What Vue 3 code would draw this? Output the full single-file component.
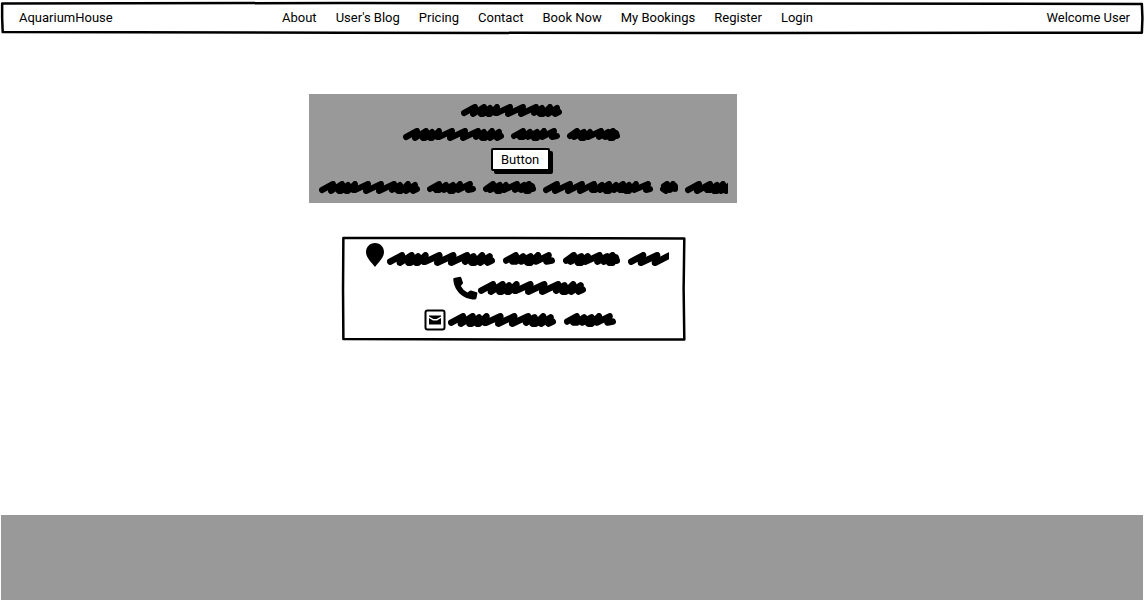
<script setup>
const links = ['About', "User's Blog", 'Pricing', 'Contact', 'Book Now', 'My Bookings', 'Register', 'Login']

// Placeholder handwriting: one zigzag pen stroke per word
const strokes = {
  long: { w: 101, d: 'M3 9 L14 3 L12 10 L23 3 L20 10 L22 10 L29 4 L27 10 L29 10 L36 3 L34 9 L36 9 L49 3 L47 10 L62 3 L60 10 L75 3 L73 9 L81 4 L79 10 L82 10 L89 3 L87 10 L96 4 L94 10 L98 8' },
  short: { w: 49, d: 'M3 8 L12 3 L9 9 L12 9 L19 4 L17 9 L26 4 L23 10 L26 10 L33 3 L31 9 L43 3 L41 9 L46 8' },
  medium: { w: 53, d: 'M3 8 L10 3 L7 9 L17 4 L14 10 L17 10 L23 4 L21 9 L34 3 L32 9 L41 4 L38 9 L46 3 L43 10 L46 10 L49 5 L50 8' },
  widest: { w: 110, d: 'M3 9 L14 3 L12 10 L27 3 L25 10 L39 3 L37 10 L51 3 L49 9 L52 9 L59 4 L57 9 L66 3 L63 10 L66 10 L73 4 L71 9 L80 3 L77 9 L80 9 L86 4 L83 10 L86 10 L93 3 L91 9 L105 3 L103 9 L107 8' },
  tiny: { w: 18, d: 'M4 5 L7 3 L3 8 L6 10 L13 3 L10 9 L15 5 L15 8' },
  cut: { w: 43, d: 'M3 9 L14 3 L12 10 L25 3 L22 9 L25 9 L32 4 L29 10 L32 10 L38 3 L36 10 L45 4 L41 10 L47 8' },
  widestCut: { w: 38, d: 'M3 9 L14 3 L12 10 L27 3 L25 10 L39 3' }
}

const heroTop = [['long'], ['long', 'short', 'medium']]
const heroBottom = ['long', 'short', 'medium', 'widest', 'tiny', 'cut']
const contacts = [
  { icon: 'pin', words: ['long', 'short', 'medium', 'widestCut'] },
  { icon: 'phone', words: ['long'] },
  { icon: 'mail', words: ['long', 'short'] }
]
</script>

<template>
  <div class="page">
    <header class="bar">
      <svg class="frame" viewBox="0 0 1000 100" preserveAspectRatio="none" aria-hidden="true">
        <path d="M1 5 L300 3 L500 4 L999 6 L999.500 50 L999 96 L600 97 L300 96 L1.500 94 L1 50 Z" />
      </svg>
      <a class="brand" href="#">AquariumHouse</a>
      <nav class="links">
        <a v-for="link in links" :key="link" href="#">{{ link }}</a>
      </nav>
      <span class="user">Welcome User</span>
    </header>

    <main>
      <section class="hero">
        <p v-for="(row, i) in heroTop" :key="i" class="words lead">
          <svg v-for="(word, j) in row" :key="j" :width="strokes[word].w" height="13" :viewBox="`0 0 ${strokes[word].w} 13`" aria-hidden="true">
            <path :d="strokes[word].d" />
          </svg>
        </p>
        <button class="action" type="button">Button</button>
        <p class="words">
          <svg v-for="(word, j) in heroBottom" :key="j" :width="strokes[word].w" height="13" :viewBox="`0 0 ${strokes[word].w} 13`" aria-hidden="true">
            <path :d="strokes[word].d" />
          </svg>
        </p>
      </section>

      <section class="card">
        <svg class="frame" viewBox="0 0 100 100" preserveAspectRatio="none" aria-hidden="true">
          <path d="M0.400 1 L50 1 L99.800 1.500 L99.600 50 L99.800 98.500 L50 98.500 L0.400 98 L0.300 50 Z" />
        </svg>
        <div v-for="item in contacts" :key="item.icon" class="contact" :class="item.icon">
          <svg v-if="item.icon === 'pin'" class="icon" width="20" height="24" viewBox="0 0 20 24" aria-hidden="true">
            <path d="M10 0 C4.700 0 1 4 1 9 C1 14 5 18 10 24 C15 18 19 14 19 9 C19 4 15.300 0 10 0 Z" />
          </svg>
          <svg v-else-if="item.icon === 'phone'" class="icon" width="25" height="24" viewBox="0 0 25 25" preserveAspectRatio="none" aria-hidden="true">
            <path d="M1 2 L7 0.700 Q8 0.700 8.300 1.700 L10 7 Q10.100 8 9.300 8.600 L7.800 10.500 Q10 15 14.500 17.200 L16.500 15.500 Q17.200 14.800 18 15.100 L23.800 17 Q24.500 17.300 24.400 18.300 L23.500 23.300 Q23.300 24.400 22 24.400 C10 24.500 0.500 14.500 0.300 3 Q0.300 2.200 1 2 Z" />
          </svg>
          <svg v-else class="icon" width="22" height="22" viewBox="0 0 22 22" aria-hidden="true">
            <rect x="1.500" y="1.500" width="19" height="19" rx="2" fill="none" stroke="#000" stroke-width="2" />
            <path d="M5 6.500 H17 V7.500 L12.500 10 H9.500 L5 7.500 Z M5 9 L9 11.500 H13 L17 9 V15.500 H5 Z" />
          </svg>
          <p class="words big">
            <svg v-for="(word, j) in item.words" :key="j" :width="Math.round(strokes[word].w * 1.07)" height="14" :viewBox="`0 0 ${strokes[word].w} 13`" aria-hidden="true">
              <path :d="strokes[word].d" />
            </svg>
          </p>
        </div>
      </section>
    </main>

    <footer class="footer"></footer>
  </div>
</template>

<style>
body {
  margin: 0;
  background: #fff;
}
</style>

<style scoped>
.page {
  display: flex;
  flex-direction: column;
  min-height: 100vh;
  color: #000;
  font-family: Roboto, "Liberation Sans", sans-serif;
  font-size: 13px;
  line-height: 16px;
}

a {
  color: inherit;
  text-decoration: none;
  white-space: nowrap;
}

.bar {
  position: relative;
  display: flex;
  align-items: center;
  min-height: 32px;
  margin: 2px 2px 0 1px;
  padding: 0 13px 0 18px;
  box-sizing: border-box;
}

.frame {
  position: absolute;
  inset: 0;
  width: 100%;
  height: 100%;
  overflow: visible;
  pointer-events: none;
}

.frame path {
  fill: none;
  stroke: #000;
  stroke-width: 2.500;
  stroke-linejoin: round;
  vector-effect: non-scaling-stroke;
}

.brand {
  flex: 0 0 263px;
}

.links {
  display: flex;
  gap: 19px;
}

.user {
  margin-left: auto;
  white-space: nowrap;
}

.hero {
  display: flex;
  flex-direction: column;
  align-items: center;
  width: 428px;
  margin: 60px 0 0 27%;
  padding: 10px 0 9px;
  box-sizing: border-box;
  background: #999;
}

.words {
  display: flex;
  gap: 7px;
  margin: 0;
}

.words.big {
  gap: 8px;
  padding-bottom: 1px;
}

.words svg {
  flex: none;
  display: block;
}

.words path {
  fill: none;
  stroke: #000;
  stroke-width: 6;
  stroke-linecap: round;
  stroke-linejoin: round;
}

.lead {
  padding-right: 24px;
}

.lead + .lead {
  margin-top: 11px;
}

.action {
  margin: 7px 6px 10px 0;
  height: 23px;
  width: 59px;
  padding: 0;
  border: 2px solid #000;
  border-radius: 2px;
  background: #fff;
  color: #000;
  box-shadow: 3px 3px 0 #000;
  font: inherit;
}

.card {
  position: relative;
  display: flex;
  flex-direction: column;
  align-items: center;
  gap: 9px;
  width: 343px;
  margin: 34px 0 0 29.9%;
  padding: 6px 0 10px 12px;
  box-sizing: border-box;
}

.contact {
  display: flex;
  align-items: center;
  gap: 2px;
}

.contact.pin {
  align-items: flex-end;
  padding-right: 6px;
}

.contact.phone {
  gap: 0;
}

.icon {
  flex: none;
  display: block;
}

.footer {
  height: 85px;
  margin: auto 2px 0 1px;
  background: #999;
}
</style>
